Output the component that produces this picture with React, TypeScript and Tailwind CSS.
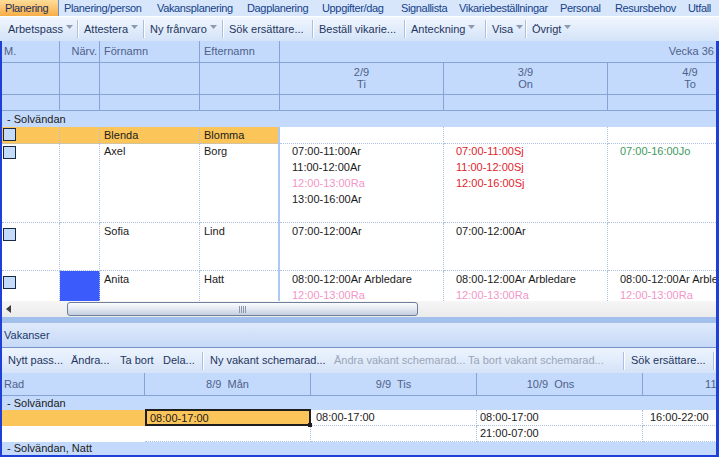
import React from "react";

const F = "font-['Liberation_Sans',Arial,sans-serif]";

function Arrow() {
  return (
    <svg width="7" height="4" viewBox="0 0 7 4" className="ml-[3px] mb-[5px] shrink-0">
      <path d="M0 0H7L3.5 4Z" fill="#8d99ad" />
    </svg>
  );
}

function Sep() {
  return <div className="w-[2px] h-[18px] border-l border-[#aebfdc] bg-white shrink-0" />;
}

const tabs: { t: string; w: number; sel?: boolean; pl: string }[] = [
  { t: "Planering", w: 58, sel: true, pl: "pl-[5px]" },
  { t: "Planering/person", w: 92, pl: "pl-[5px]" },
  { t: "Vakansplanering", w: 90, pl: "pl-[6px]" },
  { t: "Dagplanering", w: 75, pl: "pl-[6px]" },
  { t: "Uppgifter/dag", w: 79, pl: "pl-[6px]" },
  { t: "Signallista", w: 58, pl: "pl-[6px]" },
  { t: "Vikariebeställningar", w: 101, pl: "pl-[6px]" },
  { t: "Personal", w: 55, pl: "pl-[6px]" },
  { t: "Resursbehov", w: 73, pl: "pl-[6px]" },
  { t: "Utfall", w: 60, pl: "pl-[6px]" },
];

function TabBar() {
  return (
    <div className="h-[16px] flex bg-[#d7e6fa] shrink-0 overflow-hidden">
      {tabs.map((t, i) => (
        <React.Fragment key={t.t}>
          <div
            style={{ width: t.w }}
            className={`h-full flex items-center shrink-0 whitespace-nowrap tracking-[-0.35px] ${t.pl} ${
              t.sel
                ? "bg-linear-to-b from-[#fedd98] to-[#f7ad45] text-[#1c2f55]"
                : "text-[#15428b]"
            }`}
          >
            {t.t}
          </div>
          {i === 0 && <div className="w-[1px] h-full bg-[#6f8fcf] shrink-0" />}
        </React.Fragment>
      ))}
    </div>
  );
}

const topTools: { t: string; w: number; arrow?: boolean }[] = [
  { t: "Arbetspass", w: 69, arrow: true },
  { t: "Attestera", w: 59, arrow: true },
  { t: "Ny frånvaro", w: 72, arrow: true },
  { t: "Sök ersättare...", w: 83 },
  { t: "Beställ vikarie...", w: 85 },
  { t: "Anteckning", w: 74, arrow: true },
  { t: "Visa", w: 33, arrow: true },
  { t: "Övrigt", w: 60, arrow: true },
];

function Toolbar() {
  return (
    <div className="h-[25px] flex items-center pl-[8px] bg-linear-to-b from-[#f1f6fe] to-[#d3e3f8] border-t border-white shrink-0 text-[#1f3560]">
      {topTools.map((t, i) => (
        <React.Fragment key={t.t}>
          <div style={{ width: t.w }} className="flex items-center shrink-0 whitespace-nowrap">
            <span>{t.t}</span>
            {t.arrow && <Arrow />}
          </div>
          {i < topTools.length - 1 && (
            <>
              <Sep />
              <div className="w-[5px] shrink-0" />
            </>
          )}
        </React.Fragment>
      ))}
    </div>
  );
}

const HB = "border-[#86a3d6]";
const HBG = "bg-[#c4dafc]";
const HT = "text-[#4f6189]";
const DOT = "border-dotted border-[#a9c2e6]";

function Check({ mt }: { mt: string }) {
  return <div className={`w-[13px] h-[13px] border border-[#1b2a44] bg-[#c4dbfa] ml-[1px] ${mt}`} />;
}

type Line = { t: string; c: string };
const K = "text-[#1a1a1a]";
const R = "text-[#e0242c]";
const P = "text-[#f296c8]";
const G = "text-[#3d9960]";

function DayCell({ lines, last }: { lines: Line[]; last?: boolean }) {
  return (
    <div className={`pl-[12px] leading-[16px] border-b ${last ? "" : "border-r"} ${DOT} whitespace-nowrap overflow-hidden`}>
      {lines.map((l, i) => (
        <div key={i} className={l.c}>
          {l.t}
        </div>
      ))}
    </div>
  );
}

function PersonRow({
  h,
  first,
  last,
  orange,
  blue,
  mt,
  days,
}: {
  h: string;
  first: string;
  last: string;
  orange?: boolean;
  blue?: boolean;
  mt: string;
  days: Line[][];
}) {
  const ob = orange ? "bg-[#fbc55a]" : "";
  return (
    <div className={`grid grid-cols-[58px_40px_100px_80px_164px_164px_164px] ${h} shrink-0`}>
      <div className={`border-r border-b ${DOT} ${ob}`}>
        <Check mt={mt} />
      </div>
      <div className={`border-r border-b ${DOT} ${ob} ${blue ? "bg-[#3b5bfb]" : ""}`} />
      <div className={`border-r border-b ${DOT} ${ob} pl-[4px] leading-[16px] ${K}`}>{first}</div>
      <div className={`border-b ${DOT} ${ob} pl-[4px] leading-[16px] ${K} relative`}>
        {last}
        <div className="absolute right-0 top-0 bottom-[-1px] w-[2px] bg-[#adc8f3]" />
      </div>
      <DayCell lines={days[0]} />
      <DayCell lines={days[1]} />
      <DayCell lines={days[2]} last />
    </div>
  );
}

function TopGrid() {
  return (
    <div className="flex flex-col shrink-0">
      <div className={`grid grid-cols-[58px_40px_100px_80px_1fr] h-[22px] ${HBG} ${HT} border-b ${HB}`}>
        <div className={`border-r ${HB} flex items-center pl-[2px]`}>M.</div>
        <div className={`border-r ${HB} flex items-center justify-end pr-[2px]`}>Närv.</div>
        <div className={`border-r ${HB} flex items-center pl-[4px]`}>Förnamn</div>
        <div className={`border-r ${HB} flex items-center pl-[4px]`}>Efternamn</div>
        <div className="flex items-center justify-end pr-[2px]">Vecka 36</div>
      </div>
      <div className={`grid grid-cols-[58px_40px_100px_80px_164px_164px_164px] h-[32px] ${HBG} ${HT} border-b ${HB}`}>
        <div className={`border-r ${HB}`} />
        <div className={`border-r ${HB}`} />
        <div className={`border-r ${HB}`} />
        <div className={`border-r ${HB}`} />
        {[
          ["2/9", "Ti"],
          ["3/9", "On"],
          ["4/9", "To"],
        ].map(([d, w], i) => (
          <div key={d} className={`${i < 2 ? "border-r" : ""} ${HB} flex flex-col items-center pt-[3px] leading-[12px]`}>
            <div>{d}</div>
            <div>{w}</div>
          </div>
        ))}
      </div>
      <div className={`grid grid-cols-[58px_40px_100px_80px_164px_164px_164px] h-[16px] ${HBG} border-b ${HB}`}>
        <div className={`border-r ${HB}`} />
        <div className={`border-r ${HB}`} />
        <div className={`border-r ${HB}`} />
        <div className={`border-r ${HB}`} />
        <div className={`border-r ${HB}`} />
        <div className={`border-r ${HB}`} />
        <div />
      </div>
      <div className={`h-[16px] ${HBG} flex items-center pl-[5px] text-[#1a1a1a]`}>- Solvändan</div>
      <div className="h-[174px] overflow-hidden flex flex-col">
        <PersonRow h="h-[16px]" first="Blenda" last="Blomma" orange mt="mt-[1px]" days={[[], [], []]} />
        <PersonRow
          h="h-[80px]"
          first="Axel"
          last="Borg"
          mt="mt-[3px]"
          days={[
            [
              { t: "07:00-11:00Ar", c: K },
              { t: "11:00-12:00Ar", c: K },
              { t: "12:00-13:00Ra", c: P },
              { t: "13:00-16:00Ar", c: K },
            ],
            [
              { t: "07:00-11:00Sj", c: R },
              { t: "11:00-12:00Sj", c: R },
              { t: "12:00-16:00Sj", c: R },
            ],
            [{ t: "07:00-16:00Jo", c: G }],
          ]}
        />
        <PersonRow
          h="h-[48px]"
          first="Sofia"
          last="Lind"
          mt="mt-[5px]"
          days={[[{ t: "07:00-12:00Ar", c: K }], [{ t: "07:00-12:00Ar", c: K }], []]}
        />
        <PersonRow
          h="h-[48px]"
          first="Anita"
          last="Hatt"
          blue
          mt="mt-[5px]"
          days={[
            [
              { t: "08:00-12:00Ar Arbledare", c: K },
              { t: "12:00-13:00Ra", c: P },
            ],
            [
              { t: "08:00-12:00Ar Arbledare", c: K },
              { t: "12:00-13:00Ra", c: P },
            ],
            [
              { t: "08:00-12:00Ar Arbledare", c: K },
              { t: "12:00-13:00Ra", c: P },
            ],
          ]}
        />
      </div>
      <div className="h-[16px] bg-linear-to-b from-[#f6f6f6] to-[#ebebeb] flex items-start">
        <svg width="5" height="8" viewBox="0 0 5 8" className="ml-[4px] mt-[4px] shrink-0">
          <path d="M5 0V8L0 4Z" fill="#3c3c3c" />
        </svg>
        <div className="ml-[56px] mt-[1px] w-[351px] h-[14px] border border-[#6f7f9a] rounded-[3px] bg-linear-to-b from-[#fbfcfe] via-[#e3e9f2] to-[#c3cddd] flex items-center justify-center shrink-0">
          <div className="flex gap-[1px]">
            <div className="w-[1px] h-[7px] bg-[#8a98b0]" />
            <div className="w-[1px] h-[7px] bg-[#8a98b0]" />
            <div className="w-[1px] h-[7px] bg-[#8a98b0]" />
            <div className="w-[1px] h-[7px] bg-[#8a98b0]" />
          </div>
        </div>
      </div>
    </div>
  );
}

const lowTools: ({ t: string; w: number; dis?: boolean } | "sep")[] = [
  { t: "Nytt pass...", w: 63 },
  { t: "Ändra...", w: 49 },
  { t: "Ta bort", w: 43 },
  { t: "Dela...", w: 39 },
  "sep",
  { t: "Ny vakant schemarad...", w: 124 },
  { t: "Ändra vakant schemarad...", w: 134, dis: true },
  { t: "Ta bort vakant schemarad...", w: 155, dis: true },
  "sep",
  { t: "Sök ersättare...", w: 82 },
  "sep",
];

function LowerPanel() {
  const cols = "grid grid-cols-[143px_166px_166px_166px_166px]";
  return (
    <div className="flex flex-col shrink-0">
      <div className="h-[6px] bg-[#a3c0ec]" />
      <div className="h-[24px] bg-linear-to-b from-[#dfeafb] to-[#c6d9f7] flex items-center pl-[2px] text-[#1d3969]">
        Vakanser
      </div>
      <div className="h-[1px] bg-[#7592c8]" />
      <div className="h-[25px] flex items-center pl-[6px] bg-linear-to-b from-[#edf4fe] to-[#d5e3f8] text-[#1f3560] overflow-hidden">
        {lowTools.map((t, i) =>
          t === "sep" ? (
            <React.Fragment key={i}>
              <Sep />
              <div className="w-[6px] shrink-0" />
            </React.Fragment>
          ) : (
            <div
              key={i}
              style={{ width: t.w }}
              className={`shrink-0 whitespace-nowrap ${t.dis ? "text-[#9aa5b8]" : ""}`}
            >
              {t.t}
            </div>
          )
        )}
      </div>
      <div className={`${cols} h-[23px] ${HBG} ${HT} border-b ${HB} overflow-hidden`}>
        <div className={`border-r ${HB} flex items-center pl-[2px]`}>Rad</div>
        <div className={`border-r ${HB} flex items-center justify-center whitespace-pre`}>8/9  Mån</div>
        <div className={`border-r ${HB} flex items-center justify-center whitespace-pre`}>9/9  Tis</div>
        <div className={`border-r ${HB} flex items-center justify-center whitespace-pre pr-[18px]`}>10/9  Ons</div>
        <div className="flex items-center justify-center whitespace-pre">11/9  Tor</div>
      </div>
      <div className={`h-[14px] ${HBG} flex items-center pl-[5px] text-[#1a1a1a]`}>- Solvändan</div>
      <div className={`${cols} h-[16px] overflow-visible text-[#1a1a1a] leading-[14px]`}>
        <div className="bg-[#fbc55a]" />
        <div className="relative border-2 border-[#1e1e1e] bg-[#fbc55a] pl-[3px] mt-[-1px] h-[17px]">
          08:00-17:00
          <div className="absolute right-[-3px] bottom-[-3px] w-[4px] h-[4px] bg-[#1e1e1e]" />
        </div>
        <div className={`border-r border-b ${DOT} pl-[5px] leading-[15px]`}>08:00-17:00</div>
        <div className={`border-r border-b ${DOT} pl-[3px] leading-[15px]`}>08:00-17:00</div>
        <div className={`border-b ${DOT} pl-[7px] leading-[15px]`}>16:00-22:00</div>
      </div>
      <div className={`${cols} h-[16px] text-[#1a1a1a] leading-[15px]`}>
        <div className="bg-white" />
        <div className={`border-r border-b ${DOT}`} />
        <div className={`border-r border-b ${DOT}`} />
        <div className={`border-r border-b ${DOT} pl-[3px]`}>21:00-07:00</div>
        <div className={`border-b ${DOT}`} />
      </div>
      <div className={`h-[13px] ${HBG} flex items-center pl-[5px] text-[#1a1a1a]`}>- Solvändan, Natt</div>
    </div>
  );
}

export default function App() {
  return (
    <div className={`w-[719px] h-[457px] overflow-hidden bg-white text-[11px] leading-none ${F} flex flex-col`}>
      <TabBar />
      <Toolbar />
      <div className="flex-1 min-h-0 flex flex-col border-l-2 border-r-[3px] border-b-2 border-[#1f3fd9] overflow-hidden">
        <TopGrid />
        <LowerPanel />
      </div>
    </div>
  );
}
